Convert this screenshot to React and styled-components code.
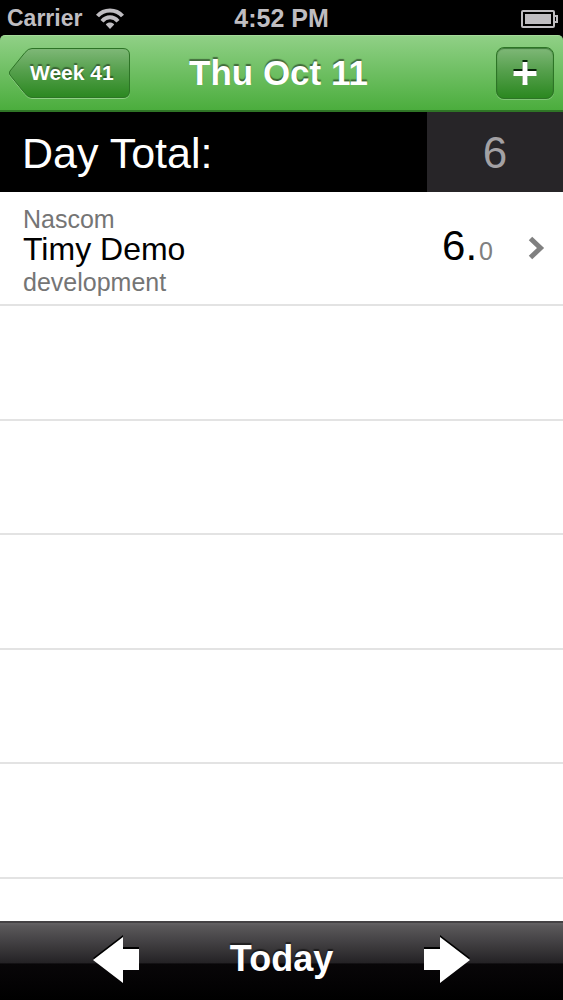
import React from 'react';
import styled, { createGlobalStyle } from 'styled-components';

const GlobalStyle = createGlobalStyle`
  * {
    box-sizing: border-box;
  }

  body {
    margin: 0;
    background: #000;
    font-family: "Liberation Sans", Arial, sans-serif;
  }

  button {
    font-family: inherit;
    border: none;
    padding: 0;
    cursor: pointer;
  }
`;

const Screen = styled.div`
  display: flex;
  flex-direction: column;
  height: 100vh;
  min-height: 480px;
  background: #000;
`;

const StatusBar = styled.div`
  display: grid;
  grid-template-columns: 1fr auto 1fr;
  align-items: center;
  flex: none;
  height: 35px;
  padding: 0 5px;
  color: #bfbdc1;
  font-size: 25px;
  font-weight: bold;
  line-height: 35px;
`;

const Carrier = styled.div`
  display: flex;
  align-items: center;
  gap: 13px;
  padding-left: 2px;
  font-size: 23px;
  line-height: 37px;
`;

const Battery = styled.svg`
  justify-self: end;
`;

const NavBar = styled.header`
  display: grid;
  grid-template-columns: 1fr auto 1fr;
  align-items: center;
  flex: none;
  height: 77px;
  padding: 0 9px;
  border-top: 1px solid #a5d99a;
  border-bottom: 2px solid #2f7526;
  border-radius: 5px 5px 0 0;
  background: linear-gradient(#90d086, #4bad3d);
`;

const BackButton = styled.button`
  display: grid;
  justify-self: start;
  width: 122px;
  height: 52px;
  background: none;
`;

const BackShape = styled.svg`
  grid-area: 1 / 1;
`;

const BackLabel = styled.span`
  grid-area: 1 / 1;
  padding-left: 21px;
  color: #fff;
  font-size: 21px;
  font-weight: bold;
  line-height: 52px;
  text-align: left;
  text-shadow: 0 -2px 1px rgba(0, 0, 0, 0.4);
`;

const Title = styled.h1`
  margin: 0;
  padding-right: 6px;
  color: #fff;
  font-size: 35px;
  line-height: 74px;
  text-shadow: 0 -2px 1px rgba(0, 0, 0, 0.45);
`;

const AddButton = styled.button`
  display: flex;
  align-items: center;
  justify-content: center;
  justify-self: end;
  width: 58px;
  height: 52px;
  border: 1px solid #2d7426;
  border-radius: 8px;
  background: linear-gradient(#7fb878, #56a04d 45%, #2b8820);
  box-shadow: inset 0 1px 1px rgba(0, 60, 0, 0.5), 0 1px 0 rgba(255, 255, 255, 0.25);
`;

const TotalBar = styled.section`
  display: flex;
  flex: none;
  height: 80px;
  line-height: 82px;
`;

const TotalLabel = styled.h2`
  flex: 1;
  margin: 0;
  padding-left: 22px;
  color: #fff;
  font-size: 43px;
  font-weight: normal;
`;

const TotalValue = styled.div`
  width: 136px;
  background: #272528;
  color: #a3a1a4;
  font-size: 44px;
  text-align: center;
`;

const List = styled.ul`
  flex: 1;
  min-height: 0;
  margin: 0;
  padding: 0;
  overflow: hidden;
  list-style: none;
  background: #fff;
`;

const Row = styled.li`
  height: 114px;
  border-bottom: 2px solid #e3e3e3;

  &:nth-child(even) {
    height: 115px;
  }
`;

const EntryButton = styled.button`
  display: flex;
  align-items: center;
  width: 100%;
  height: 112px;
  padding: 0 18px 0 23px;
  background: none;
  text-align: left;
`;

const EntryText = styled.span`
  display: flex;
  flex: 1;
  flex-direction: column;
  padding-top: 4px;
`;

const Small = styled.span`
  color: #757575;
  font-size: 25px;
  line-height: 28px;
`;

const Project = styled.span`
  color: #000;
  font-size: 32px;
  line-height: 32px;
  padding-bottom: 3px;
`;

const Hours = styled.span`
  margin-right: 35px;
  color: #000;
  font-size: 42px;
  line-height: 48px;
`;

const Decimals = styled.span`
  margin-left: 2px;
  color: #808080;
  font-size: 25px;
`;

const Toolbar = styled.footer`
  display: grid;
  grid-template-columns: 1fr auto 1fr;
  align-items: center;
  flex: none;
  height: 79px;
  padding: 0 92px 5px;
  border-top: 2px solid #444244;
  background: linear-gradient(#656365, #5a585a 3px, #242225 52%, #080608 53%, #000);
`;

const ArrowButton = styled.button`
  display: flex;
  justify-self: ${(props) => (props.$next ? 'end' : 'start')};
  background: none;
`;

const TodayButton = styled.button`
  background: none;
  color: #fff;
  font-size: 36px;
  font-weight: bold;
  line-height: 72px;
  text-shadow: 0 -2px 1px rgba(0, 0, 0, 0.5);
`;

const WifiIcon = () => (
  <svg width="30" height="24" viewBox="0 0 30 24" fill="none" stroke="#bfbdc1" strokeWidth="4">
    <path d="M2.5 9 C9 1.5 21 1.5 27.5 9" />
    <path d="M7 14.2 C11.5 9 18.5 9 23 14.2" />
    <path d="M15 22 L10.8 17.4 C13 15 17 15 19.2 17.4 Z" fill="#bfbdc1" stroke="none" />
  </svg>
);

const BatteryIcon = () => (
  <Battery width="37" height="18" viewBox="0 0 37 18">
    <rect x="1" y="1" width="32" height="16" rx="1" fill="none" stroke="#bfbdc1" strokeWidth="2" />
    <rect x="4" y="4" width="26" height="10" fill="#bfbdc1" />
    <path d="M34 6 H36 V12 H34" fill="none" stroke="#bfbdc1" strokeWidth="2" />
  </Battery>
);

const PlusIcon = () => (
  <svg width="24" height="26" viewBox="0 0 24 26">
    <path d="M9.5 0 H14.5 V9 H23.5 V14 H14.5 V23 H9.5 V14 H0.5 V9 H9.5 Z" fill="#08260a" />
    <path d="M9.5 2 H14.5 V11 H23.5 V16 H14.5 V25 H9.5 V16 H0.5 V11 H9.5 Z" fill="#fff" />
  </svg>
);

const ChevronIcon = () => (
  <svg width="17" height="24" viewBox="0 0 17 24" fill="none" stroke="#808080" strokeWidth="5">
    <path d="M2.5 2.5 L12.5 12 L2.5 21.5" />
  </svg>
);

const ArrowIcon = ({ next }) => {
  const path = next ? 'M47 25 L17 2 V14 H1 V35 H17 V48 Z' : 'M1 25 L31 2 V14 H47 V35 H31 V48 Z';
  return (
    <svg width="48" height="48" viewBox="0 0 48 48">
      <path d={path} transform="translate(0 -2)" fill="#000" />
      <path d={path} fill="#fff" />
    </svg>
  );
};

const BACK_PATH = 'M23 1.5 H114 Q120.5 1.5 120.5 8 V44 Q120.5 50.5 114 50.5 H23 Q19 50.5 16 46.5 L1 28 Q-0.5 26 1 24 L16 5.5 Q19 1.5 23 1.5 Z';

const entries = [
  { client: 'Nascom', project: 'Timy Demo', task: 'development', hours: '6.', decimals: '0' },
];

const EMPTY_ROWS = 6;

function App() {
  return (
    <Screen>
      <GlobalStyle />

      <StatusBar>
        <Carrier>
          Carrier
          <WifiIcon />
        </Carrier>
        <span>4:52 PM</span>
        <BatteryIcon />
      </StatusBar>

      <NavBar>
        <BackButton>
          <BackShape width="122" height="52" viewBox="0 0 122 52">
            <defs>
              <linearGradient id="back" x1="0" y1="0" x2="0" y2="1">
                <stop offset="0" stopColor="#7fb878" />
                <stop offset="0.45" stopColor="#56a04d" />
                <stop offset="1" stopColor="#2b8820" />
              </linearGradient>
            </defs>
            <path d={BACK_PATH} transform="translate(0 1)" fill="none" stroke="#8fd085" />
            <path d={BACK_PATH} fill="url(#back)" stroke="#2d7426" />
          </BackShape>
          <BackLabel>Week 41</BackLabel>
        </BackButton>
        <Title>Thu Oct 11</Title>
        <AddButton aria-label="Add entry">
          <PlusIcon />
        </AddButton>
      </NavBar>

      <TotalBar>
        <TotalLabel>Day Total:</TotalLabel>
        <TotalValue>6</TotalValue>
      </TotalBar>

      <List>
        {entries.map((entry) => (
          <Row key={entry.project}>
            <EntryButton>
              <EntryText>
                <Small>{entry.client}</Small>
                <Project>{entry.project}</Project>
                <Small>{entry.task}</Small>
              </EntryText>
              <Hours>
                {entry.hours}
                <Decimals>{entry.decimals}</Decimals>
              </Hours>
              <ChevronIcon />
            </EntryButton>
          </Row>
        ))}
        {Array.from({ length: EMPTY_ROWS }, (_, i) => (
          <Row key={i} />
        ))}
      </List>

      <Toolbar>
        <ArrowButton aria-label="Previous day">
          <ArrowIcon />
        </ArrowButton>
        <TodayButton>Today</TodayButton>
        <ArrowButton $next aria-label="Next day">
          <ArrowIcon next />
        </ArrowButton>
      </Toolbar>
    </Screen>
  );
}

export default App;
